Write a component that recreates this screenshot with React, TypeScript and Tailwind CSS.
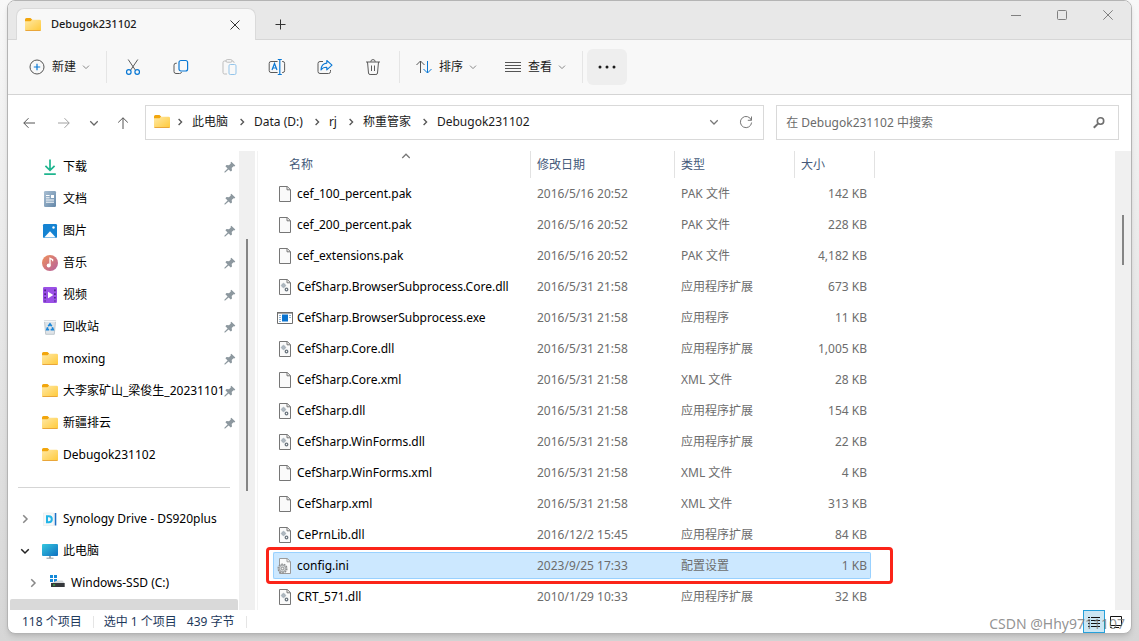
import { useState } from "react";
import type { ReactNode } from "react";

type FileKind = "blank" | "dll" | "exe" | "ini";

interface FileRow {
  name: string;
  date: string;
  type: string;
  size: string;
  kind: FileKind;
}

const files: FileRow[] = [
  { name: "cef_100_percent.pak", date: "2016/5/16 20:52", type: "PAK 文件", size: "142 KB", kind: "blank" },
  { name: "cef_200_percent.pak", date: "2016/5/16 20:52", type: "PAK 文件", size: "228 KB", kind: "blank" },
  { name: "cef_extensions.pak", date: "2016/5/16 20:52", type: "PAK 文件", size: "4,182 KB", kind: "blank" },
  { name: "CefSharp.BrowserSubprocess.Core.dll", date: "2016/5/31 21:58", type: "应用程序扩展", size: "673 KB", kind: "dll" },
  { name: "CefSharp.BrowserSubprocess.exe", date: "2016/5/31 21:58", type: "应用程序", size: "11 KB", kind: "exe" },
  { name: "CefSharp.Core.dll", date: "2016/5/31 21:58", type: "应用程序扩展", size: "1,005 KB", kind: "dll" },
  { name: "CefSharp.Core.xml", date: "2016/5/31 21:58", type: "XML 文件", size: "28 KB", kind: "blank" },
  { name: "CefSharp.dll", date: "2016/5/31 21:58", type: "应用程序扩展", size: "154 KB", kind: "dll" },
  { name: "CefSharp.WinForms.dll", date: "2016/5/31 21:58", type: "应用程序扩展", size: "22 KB", kind: "dll" },
  { name: "CefSharp.WinForms.xml", date: "2016/5/31 21:58", type: "XML 文件", size: "4 KB", kind: "blank" },
  { name: "CefSharp.xml", date: "2016/5/31 21:58", type: "XML 文件", size: "313 KB", kind: "blank" },
  { name: "CePrnLib.dll", date: "2016/12/2 15:45", type: "应用程序扩展", size: "84 KB", kind: "dll" },
  { name: "config.ini", date: "2023/9/25 17:33", type: "配置设置", size: "1 KB", kind: "ini" },
  { name: "CRT_571.dll", date: "2010/1/29 10:33", type: "应用程序扩展", size: "32 KB", kind: "dll" },
];

const crumbs = ["此电脑", "Data (D:)", "rj", "称重管家", "Debugok231102"];

function FolderIcon() {
  return (
    <svg width="16" height="16" viewBox="0 0 16 16" className="shrink-0">
      <path d="M0 2.5A1.5 1.5 0 0 1 1.5 1h4l1.8 1.7L5.500 5H0z" fill="#f2a60d" />
      <path d="M0 4.300h5.600L7.400 2.700h7.300A1.300 1.300 0 0 1 16 4v8.700a1.300 1.300 0 0 1-1.300 1.300H1.300A1.300 1.300 0 0 1 0 12.700z" fill="url(#folderFill)" />
      <path d="M.2 13.100a1.300 1.300 0 0 0 1.100.9h13.400a1.300 1.300 0 0 0 1.100-.9z" fill="#e9a63a" />
      <defs>
        <linearGradient id="folderFill" x1="0" y1="0" x2="1" y2="1">
          <stop offset="0" stopColor="#ffe9a6" />
          <stop offset="1" stopColor="#ffc938" />
        </linearGradient>
      </defs>
    </svg>
  );
}

function Chevron({
  dir,
  size = 8,
  weight = 1,
  className = "",
}: {
  dir: "down" | "right" | "up";
  size?: number;
  weight?: number;
  className?: string;
}) {
  const d = {
    down: "M1 2.6 4 5.6 7 2.6",
    up: "M1 5.6 4 2.6 7 5.6",
    right: "M2.6 1 5.6 4 2.6 7",
  }[dir];
  return (
    <svg
      width={size}
      height={size}
      viewBox="0 0 8 8"
      fill="none"
      stroke="currentColor"
      strokeWidth={weight}
      className={`shrink-0 ${className}`}
    >
      <path d={d} />
    </svg>
  );
}

function PinIcon() {
  return (
    <svg width="12" height="12" viewBox="0 0 12 12" fill="#8d989f" className="shrink-0">
      <path d="M7.3.8 11.3 4.4l-1 1-.8-.1-1.8 1.8.3 2.4-1.2 1L4.6 8.4 1.2 11.6H.4v-.8l3.2-3.4L1.4 5.2l1.1-1.1 2.5.2 1.8-1.9-.2-.9z" />
    </svg>
  );
}

function FileIcon({ kind }: { kind: FileKind }) {
  if (kind === "exe") {
    return (
      <svg width="16" height="16" viewBox="0 0 16 16" className="shrink-0">
        <path d="M.5 2.5h15v11H.5z" fill="#fff" stroke="#6f6f6f" />
        <path d="M0 2h16v1.6H0z" fill="#6f6f6f" />
        <path d="M5 4.5h6v7H5z" fill="#0a73cf" />
        <path d="M2 5.5h2M2 7.5h2M2 9.5h2M2 11.5h2M12 5.5h2M12 7.5h2" stroke="#8fb2cf" />
      </svg>
    );
  }
  const line = kind === "ini" ? "#9a9a9a" : "#767676";
  return (
    <svg width="16" height="16" viewBox="0 0 16 16" className="shrink-0">
      <path d="M2.5.5h7.800l3.200 3.200v11.800h-11z" fill="#fafafa" stroke={line} />
      <path d="M10 .5v3.3h3.5" fill="none" stroke={line} />
      {kind === "dll" && (
        <g fill="none">
          <circle cx="6.5" cy="6.5" r="1.5" stroke="#a9b3bb" strokeWidth="1.5" />
          <circle cx="9.5" cy="10.5" r="1.3" stroke="#6d7780" strokeWidth="1.3" />
          <path d="M6.5 3.8v5.4M3.8 6.5h5.4" stroke="#a9b3bb" strokeWidth=".7" />
        </g>
      )}
      {kind === "ini" && (
        <g fill="none" stroke="#8d8d8d">
          <circle cx="5.5" cy="10.5" r="4.4" fill="#c9ced2" strokeWidth="1.3" strokeDasharray="1.7 1" />
          <circle cx="5.5" cy="10.5" r="3.2" fill="#dadddf" strokeWidth=".7" />
          <circle cx="5.5" cy="10.5" r="1.3" fill="#f7f7f7" />
        </g>
      )}
    </svg>
  );
}

const downloadIcon = (
  <svg width="16" height="16" viewBox="0 0 16 16" fill="none" stroke="#1fb58f" strokeWidth="1.7">
    <path d="M8 .5v10.8M3.4 6.8 8 11.4l4.6-4.6M2.2 15.1h11.6" />
  </svg>
);

const documentIcon = (
  <svg width="16" height="16" viewBox="0 0 16 16">
    <rect x="2" width="12" height="16" rx="1.2" fill="url(#docFill)" />
    <path d="M4 4.5h3.6M4 6.8h3.6M4 9h8M4 11.2h8" stroke="#fff" />
    <path d="M9 4h3v3H9z" fill="#fff" />
    <defs>
      <linearGradient id="docFill" x1="0" y1="0" x2="1" y2="1">
        <stop offset="0" stopColor="#a9bfd3" />
        <stop offset="1" stopColor="#6487a8" />
      </linearGradient>
    </defs>
  </svg>
);

const pictureIcon = (
  <svg width="16" height="16" viewBox="0 0 16 16">
    <rect x="1" y="1" width="14" height="14" rx="1.3" fill="#1583d2" />
    <path d="M2.2 14.4 8 8.2l5.8 6.2z" fill="#fff" />
    <circle cx="11.5" cy="4.5" r="1.2" fill="#fff" />
  </svg>
);

const musicIcon = (
  <svg width="16" height="16" viewBox="0 0 16 16">
    <circle cx="8" cy="8" r="8" fill="url(#musicFill)" />
    <circle cx="6.7" cy="10.6" r="2" fill="#fff" />
    <path d="M8 10.6V3.4l2.6 1.3v1.5" fill="none" stroke="#fff" strokeWidth="1.3" />
    <defs>
      <linearGradient id="musicFill" x1="0" y1="0" x2="1" y2="1">
        <stop offset="0" stopColor="#f0905a" />
        <stop offset="1" stopColor="#b4609f" />
      </linearGradient>
    </defs>
  </svg>
);

const videoIcon = (
  <svg width="16" height="16" viewBox="0 0 16 16">
    <rect x="1" width="14" height="16" rx="1.3" fill="#9a50e6" />
    <path d="M6 4.8 11.3 8 6 11.2z" fill="#fff" />
    <path d="M3.1 2.5v12M12.9 2.5v12" stroke="#4c2380" strokeWidth="1.6" strokeDasharray="1.7 2" />
  </svg>
);

const recycleIcon = (
  <svg width="16" height="16" viewBox="0 0 16 16">
    <path d="M2.400 1.500h11.200l-1.300 13.800H3.700z" fill="#dfe4e8" stroke="#b4bcc3" strokeWidth=".8" />
    <path d="M2 1.5h12l-.2 1.6H2.2z" fill="#f4f6f7" />
    <path d="M6.300 7.300 8 4.900l1.700 2.400M10.300 8.300l.9 2.400H8.600M7.200 10.700H4.800l.9-2.400" fill="none" stroke="#1a86d8" strokeWidth="1.700" />
  </svg>
);

const synologyIcon = (
  <svg width="16" height="16" viewBox="0 0 16 16">
    <path d="M1.5 2h10v12.5h-10z" fill="#f5f7f8" stroke="#e6e9ea" strokeWidth=".6" />
    <path d="M5 5.2h1.8a2.8 2.8 0 0 1 0 6H5z" fill="none" stroke="#22b4e6" strokeWidth="2" />
    <path d="M13.5 2v12.5" stroke="#1f6fc4" strokeWidth="1.6" />
  </svg>
);

const computerIcon = (
  <svg width="16" height="16" viewBox="0 0 16 16">
    <rect y="1" width="16" height="12" rx="1" fill="url(#pcFill)" />
    <path d="M7 13h2v2H7z" fill="#a0a7ad" />
    <path d="M4.5 15.2h7" stroke="#8e979e" />
    <defs>
      <linearGradient id="pcFill" x1="0" y1="0" x2="1" y2="1">
        <stop offset="0" stopColor="#35c8df" />
        <stop offset="1" stopColor="#0f6fc0" />
      </linearGradient>
    </defs>
  </svg>
);

const driveIcon = (
  <svg width="16" height="16" viewBox="0 0 16 16">
    <path d="M1 0h3v3H1zM5 0h3v3H5zM1 4h3v3H1zM5 4h3v3H5z" fill="#1489d8" />
    <path d="M8.500 5.500h5l2 2.500H2.500z" fill="#d4d7d9" />
    <path d="M2 8h13.700v4H2z" fill="#35383b" />
    <path d="M4 10h2.200" stroke="#43d649" />
  </svg>
);

const quickAccess: { label: string; icon: ReactNode; pinned: boolean }[] = [
  { label: "下载", icon: downloadIcon, pinned: true },
  { label: "文档", icon: documentIcon, pinned: true },
  { label: "图片", icon: pictureIcon, pinned: true },
  { label: "音乐", icon: musicIcon, pinned: true },
  { label: "视频", icon: videoIcon, pinned: true },
  { label: "回收站", icon: recycleIcon, pinned: true },
  { label: "moxing", icon: <FolderIcon />, pinned: true },
  { label: "大李家矿山_梁俊生_20231101", icon: <FolderIcon />, pinned: true },
  { label: "新疆排云", icon: <FolderIcon />, pinned: true },
  { label: "Debugok231102", icon: <FolderIcon />, pinned: false },
];

function TitleBar() {
  return (
    <div className="flex h-[39px] shrink-0 items-end border-b border-[#d6d6d6] bg-[#e8e8e8] pl-2">
      <div className="-mb-px flex h-8 w-60 items-center rounded-t-lg border border-b-0 border-[#dadada] bg-[#f8f8f8] pr-[10px] pl-2">
        <FolderIcon />
        <span className="ml-[10px] flex-1 text-[11px] font-medium text-[#1b1b1b]">Debugok231102</span>
        <button aria-label="关闭标签页" className="flex size-5 items-center justify-center text-[#333]">
          <svg width="10" height="10" viewBox="0 0 10 10" stroke="currentColor">
            <path d="M.5.5l9 9M9.5.5l-9 9" />
          </svg>
        </button>
      </div>
      <button aria-label="新建标签页" className="ml-[9px] flex size-[30px] items-center justify-center text-[#333]">
        <svg width="11" height="11" viewBox="0 0 11 11" stroke="currentColor">
          <path d="M5.5.5v10M.5 5.5h10" />
        </svg>
      </button>
      <div className="ml-auto flex self-start text-[#808080]">
        <button aria-label="最小化" className="flex h-7 w-[46px] items-center justify-center">
          <svg width="10" height="10" viewBox="0 0 10 10" stroke="currentColor">
            <path d="M0 5.5h10" />
          </svg>
        </button>
        <button aria-label="最大化" className="flex h-7 w-[46px] items-center justify-center">
          <svg width="10" height="10" viewBox="0 0 10 10" stroke="currentColor" fill="none">
            <rect x=".5" y=".5" width="9" height="9" rx="1" />
          </svg>
        </button>
        <button aria-label="关闭" className="flex h-7 w-[46px] items-center justify-center">
          <svg width="10" height="10" viewBox="0 0 10 10" stroke="currentColor">
            <path d="M.3.3l9.4 9.4M9.7.3.3 9.7" />
          </svg>
        </button>
      </div>
    </div>
  );
}

function ToolButton({ label, children }: { label: string; children: ReactNode }) {
  return (
    <button aria-label={label} className="flex h-9 w-12 items-center justify-center">
      <svg width="18" height="18" viewBox="0 0 18 18" fill="none" stroke="#5b5b5b">
        {children}
      </svg>
    </button>
  );
}

function MenuButton({ label, children }: { label: string; children: ReactNode }) {
  return (
    <button className="flex h-9 items-center text-xs text-[#1b1b1b]">
      <svg width="16" height="16" viewBox="0 0 16 16" fill="none" stroke="#555">
        {children}
      </svg>
      <span className="mr-[6px] ml-[7px]">{label}</span>
      <Chevron dir="down" className="text-[#888]" />
    </button>
  );
}

function Toolbar() {
  return (
    <div className="flex h-[55px] shrink-0 items-center border-b border-[#d4d4d4] bg-[#f8f8f8] pl-[21px]">
      <MenuButton label="新建">
        <circle cx="8" cy="8" r="7" />
        <path d="M8 4.8v6.4M4.8 8h6.4" stroke="#0a78d4" strokeWidth="1.2" />
      </MenuButton>
      <span className="mr-[2px] ml-4 h-8 w-px bg-[#e5e5e5]" />
      <ToolButton label="剪切">
        <path d="M4.2 1.5 11.3 12M13.8 1.5 6.7 12" />
        <circle cx="4.8" cy="14" r="2.3" stroke="#0a78d4" strokeWidth="1.2" />
        <circle cx="13.2" cy="14" r="2.3" stroke="#0a78d4" strokeWidth="1.2" />
      </ToolButton>
      <ToolButton label="复制">
        <path d="M4.8 5.2H4a2 2 0 0 0-2 2v6.3a2 2 0 0 0 2 2h3.600a2 2 0 0 0 2-1.400" />
        <rect x="7" y="2.5" width="8.6" height="10.5" rx="2" stroke="#0a78d4" strokeWidth="1.2" />
      </ToolButton>
      <ToolButton label="粘贴">
        <path d="M6 3H4.5A1.5 1.5 0 0 0 3 4.5v10A1.5 1.5 0 0 0 4.500 16H7M12 3h.5A1.500 1.500 0 0 1 14 4.500V5" stroke="#bdbdbd" />
        <rect x="6" y="1.6" width="6" height="2.6" rx="1.2" stroke="#bdbdbd" />
        <rect x="9" y="6.5" width="7" height="10" rx="1.3" stroke="#93c4ea" />
      </ToolButton>
      <ToolButton label="重命名">
        <path d="M9.6 3.5H3a1.8 1.8 0 0 0-1.8 1.8v7.4A1.8 1.8 0 0 0 3 14.5h6.6M14 3.5h.8a1.8 1.8 0 0 1 1.8 1.8v7.4a1.8 1.8 0 0 1-1.8 1.8H14" />
        <path d="M4 12l2.500-6.500L9 12M4.8 10h3.4M11.8 1.5v15M9.8 1.5h4M9.8 16.5h4" stroke="#0a78d4" strokeWidth="1.2" />
      </ToolButton>
      <ToolButton label="共享">
        <path d="M7 3.5H4a2 2 0 0 0-2 2v8a2 2 0 0 0 2 2h8.5a2 2 0 0 0 2-2V12" />
        <path d="M10.8 2.5 16 7.2l-5.2 4.6V9.3C8 9.2 6.3 10 5 12c.1-3.5 2-6.5 5.8-6.9z" stroke="#0a78d4" strokeWidth="1.1" strokeLinejoin="round" />
      </ToolButton>
      <ToolButton label="删除">
        <path d="M2 4h14M6.8 3.8a2.2 2.2 0 0 1 4.400 0M3.500 4l1 11a1.600 1.600 0 0 0 1.600 1.500h5.800a1.600 1.600 0 0 0 1.600-1.500l1-11M7.500 7.500v5.500M10.500 7.500v5.500" />
      </ToolButton>
      <span className="mr-4 ml-[2px] h-8 w-px bg-[#e5e5e5]" />
      <MenuButton label="排序">
        <path d="M4.5 14V2M.5 6l4-4 4 4" />
        <path d="M11.5 2v12M7.5 10l4 4 4-4" stroke="#0a78d4" />
      </MenuButton>
      <span className="w-7" />
      <MenuButton label="查看">
        <path d="M0 3.5h16M0 6.5h16M0 9.5h16M0 12.5h16" />
      </MenuButton>
      <span className="mr-1 ml-4 h-8 w-px bg-[#e5e5e5]" />
      <button aria-label="更多" className="flex h-9 w-10 items-center justify-center rounded-md bg-[#eee]">
        <svg width="18" height="4" viewBox="0 0 18 4" fill="#1b1b1b">
          <circle cx="2" cy="2" r="1.5" />
          <circle cx="9" cy="2" r="1.5" />
          <circle cx="16" cy="2" r="1.5" />
        </svg>
      </button>
    </div>
  );
}

function AddressRow() {
  return (
    <div className="flex shrink-0 items-center pt-[10px] pr-3 pb-[11px] pl-[5px]">
      <button aria-label="后退" className="mr-1 flex h-8 w-8 items-center justify-center text-[#555]">
        <svg width="12" height="12" viewBox="0 0 12 12" fill="none" stroke="currentColor">
          <path d="M12 6H.8M5.5 1.2.8 6l4.7 4.8" />
        </svg>
      </button>
      <button aria-label="前进" className="flex h-8 w-[30px] items-center justify-center text-[#a0a0a0]">
        <svg width="12" height="12" viewBox="0 0 12 12" fill="none" stroke="currentColor">
          <path d="M0 6h11.2M6.5 1.2 11.2 6l-4.7 4.8" />
        </svg>
      </button>
      <button aria-label="最近位置" className="flex h-8 w-[30px] items-center justify-center text-[#666]">
        <Chevron dir="down" size={10} />
      </button>
      <button aria-label="上移" className="mr-2 flex h-8 w-7 items-center justify-center text-[#555]">
        <svg width="12" height="12" viewBox="0 0 12 12" fill="none" stroke="currentColor">
          <path d="M6 12V.8M1.2 5.5 6 .8l4.8 4.7" />
        </svg>
      </button>
      <nav aria-label="地址" className="flex h-[35px] flex-1 items-center border border-[#d9d9d9] pb-px pl-2 text-xs text-[#1b1b1b]">
        <FolderIcon />
        {crumbs.map((crumb) => (
          <span key={crumb} className="flex items-center">
            <span className="flex w-5 justify-center text-[#555]">
              <Chevron dir="right" weight={1.3} />
            </span>
            <a href="#" className="pr-1 pl-[2px] whitespace-nowrap">{crumb}</a>
          </span>
        ))}
        <button aria-label="历史记录" className="ml-auto flex h-8 w-8 items-center justify-center text-[#777]">
          <Chevron dir="down" size={10} />
        </button>
        <button aria-label="刷新" className="mr-px flex h-8 w-8 items-center justify-center text-[#777]">
          <svg width="14" height="14" viewBox="0 0 14 14" fill="none" stroke="currentColor">
            <path d="M12.3 5.2A5.6 5.6 0 1 0 12.6 7.5M12.5 1.500v3.800H8.800" />
          </svg>
        </button>
      </nav>
      <label className="ml-3 flex h-[35px] w-[31%] items-center border border-[#d9d9d9] pr-3 pl-[9px]">
        <input
          aria-label="搜索"
          placeholder="在 Debugok231102 中搜索"
          className="min-w-0 flex-1 bg-transparent text-xs outline-none placeholder:text-[#6b6b6b]"
        />
        <svg width="14" height="14" viewBox="0 0 14 14" fill="none" stroke="#6f6f6f" strokeWidth="1.6">
          <circle cx="8.5" cy="5" r="3.2" />
          <path d="M6 7.6 1.800 11.800" strokeWidth="2" />
        </svg>
      </label>
    </div>
  );
}

function Sidebar() {
  return (
    <aside className="flex w-[247px] shrink-0 overflow-hidden text-xs text-black">
      <div className="flex min-w-0 flex-1 flex-col">
        <ul className="shrink-0">
          {quickAccess.map((item) => (
            <li key={item.label} className="flex h-8 items-center pr-[3px] pl-[34px]">
              <span className="mr-[5px] shrink-0">{item.icon}</span>
              <a href="#" className="min-w-0 flex-1 whitespace-nowrap">{item.label}</a>
              {item.pinned && <PinIcon />}
            </li>
          ))}
        </ul>
        <hr className="mt-4 mr-[9px] mb-[15px] ml-[10px] border-[#d5d5d5]" />
        <ul className="shrink-0">
          <li className="flex h-8 items-center pl-3">
            <Chevron dir="right" size={10} weight={1.2} className="mr-3 text-[#888]" />
            {synologyIcon}
            <a href="#" className="ml-[5px] whitespace-nowrap">Synology Drive - DS920plus</a>
          </li>
          <li className="flex h-8 items-center pl-3">
            <Chevron dir="down" size={10} weight={1.2} className="mr-3 text-[#222]" />
            {computerIcon}
            <a href="#" className="ml-[5px]">此电脑</a>
          </li>
          <li className="flex h-8 items-center pl-5">
            <Chevron dir="right" size={10} weight={1.2} className="mr-[11px] text-[#888]" />
            {driveIcon}
            <a href="#" className="ml-[6px]">Windows-SSD (C:)</a>
          </li>
        </ul>
        <div className="mt-auto mr-px ml-[2px] h-[11px] shrink-0 rounded-t-xs bg-[#d9d9d9]" />
      </div>
      <div className="flex w-4 justify-center bg-[#f0f0f0] pt-[88px]">
        <div className="h-[252px] w-[2px] bg-[#858585]" />
      </div>
    </aside>
  );
}

function FileTable() {
  const [selected, setSelected] = useState("config.ini");

  return (
    <main className="ml-[2px] flex min-w-0 flex-1 overflow-hidden border-l border-[#f3f3f3] pl-[15px]">
      <div>
        <table className="w-[602px] table-fixed border-separate border-spacing-0 text-xs">
          <thead>
            <tr className="h-[27px] text-left text-[#44597a]">
              <th className="relative w-[258px] border-r border-[#e2e2e2] p-0 pl-4 font-normal">
                名称
                <Chevron dir="up" size={10} className="absolute top-0 left-1/2 -ml-px text-[#777]" />
              </th>
              <th className="w-36 border-r border-[#e2e2e2] p-0 pl-[6px] font-normal">修改日期</th>
              <th className="w-30 border-r border-[#e2e2e2] p-0 pl-[6px] font-normal">类型</th>
              <th className="w-20 border-r border-[#e2e2e2] p-0 pl-[6px] font-normal">大小</th>
            </tr>
          </thead>
          <tbody>
            {files.map((file) => {
              const active = file.name === selected;
              const cell = `flex h-[27px] items-center whitespace-nowrap ${
                active ? "border-y border-[#99d1ff] bg-[#cce8ff]" : "border-y border-transparent"
              }`;
              return (
                <tr key={file.name} className="relative text-[#6d6d6d]" onClick={() => setSelected(file.name)}>
                  <td className="px-0 py-[2px]">
                    <div className={`${cell} border-l pl-[3px] text-black ${active ? "rounded-l-xs" : ""}`}>
                      <FileIcon kind={file.kind} />
                      <span className="ml-1">{file.name}</span>
                    </div>
                  </td>
                  <td className="px-0 py-[2px]">
                    <div className={`${cell} pl-[6px]`}>{file.date}</div>
                  </td>
                  <td className="px-0 py-[2px]">
                    <div className={`${cell} pl-[6px]`}>{file.type}</div>
                  </td>
                  <td className="py-[2px] pr-1 pl-0">
                    <div className={`${cell} justify-end border-r pr-[3px] ${active ? "rounded-r-xs" : ""}`}>{file.size}</div>
                    {active && (
                      <div className="pointer-events-none absolute -top-[3px] -right-[18px] -bottom-[3px] -left-[7px] rounded-sm border-3 border-[#fb2418]" />
                    )}
                  </td>
                </tr>
              );
            })}
          </tbody>
        </table>
      </div>
      <div className="ml-auto flex w-4 justify-center bg-[#f0f0f0] pt-16">
        <div className="h-[50px] w-[2px] bg-[#858585]" />
      </div>
    </main>
  );
}

function StatusBar() {
  return (
    <footer className="relative flex h-[23px] shrink-0 items-center pr-1 pl-[14px] text-xs text-[#1e395b]">
      <span>118 个项目</span>
      <span className="mr-[10px] ml-[11px] h-3 w-px bg-[#e5e5e5]" />
      <span>选中 1 个项目</span>
      <span className="ml-[10px]">439 字节</span>
      <span className="mx-[11px] h-3 w-px bg-[#e5e5e5]" />
      <button aria-label="详细信息" className="ml-auto flex h-[23px] w-[22px] items-center justify-center border border-[#26a0da] bg-[#cbe6f3]">
        <svg width="12" height="12" viewBox="0 0 12 12" stroke="#111" fill="none">
          <path d="M0 1.5h2M3 1.5h9M0 4.5h2M3 4.5h9M0 7.5h2M3 7.5h9M0 10.5h2M3 10.5h9" />
        </svg>
      </button>
      <button aria-label="大图标" className="flex h-[23px] w-[22px] items-center justify-center">
        <svg width="12" height="12" viewBox="0 0 12 12" stroke="#111" fill="none">
          <path d="M.5.5h11v9H.5zM0 11.5h2M4 11.5h5" />
        </svg>
      </button>
      <span className="pointer-events-none absolute right-[6px] -bottom-px text-sm text-[#777]/80">CSDN @Hhy9711107</span>
    </footer>
  );
}

export default function App() {
  return (
    <div className="flex h-screen bg-linear-to-b from-[#f8f8f8] to-[#d6d6d6] px-[7px] pb-[7px] font-['Noto_Sans','Noto_Sans_CJK_SC',sans-serif]">
      <div className="flex min-w-0 flex-1 flex-col overflow-hidden rounded-lg border border-[#b4b4b4] bg-white shadow-md">
        <TitleBar />
        <Toolbar />
        <AddressRow />
        <div className="flex min-h-0 flex-1">
          <Sidebar />
          <FileTable />
        </div>
        <StatusBar />
      </div>
    </div>
  );
}
